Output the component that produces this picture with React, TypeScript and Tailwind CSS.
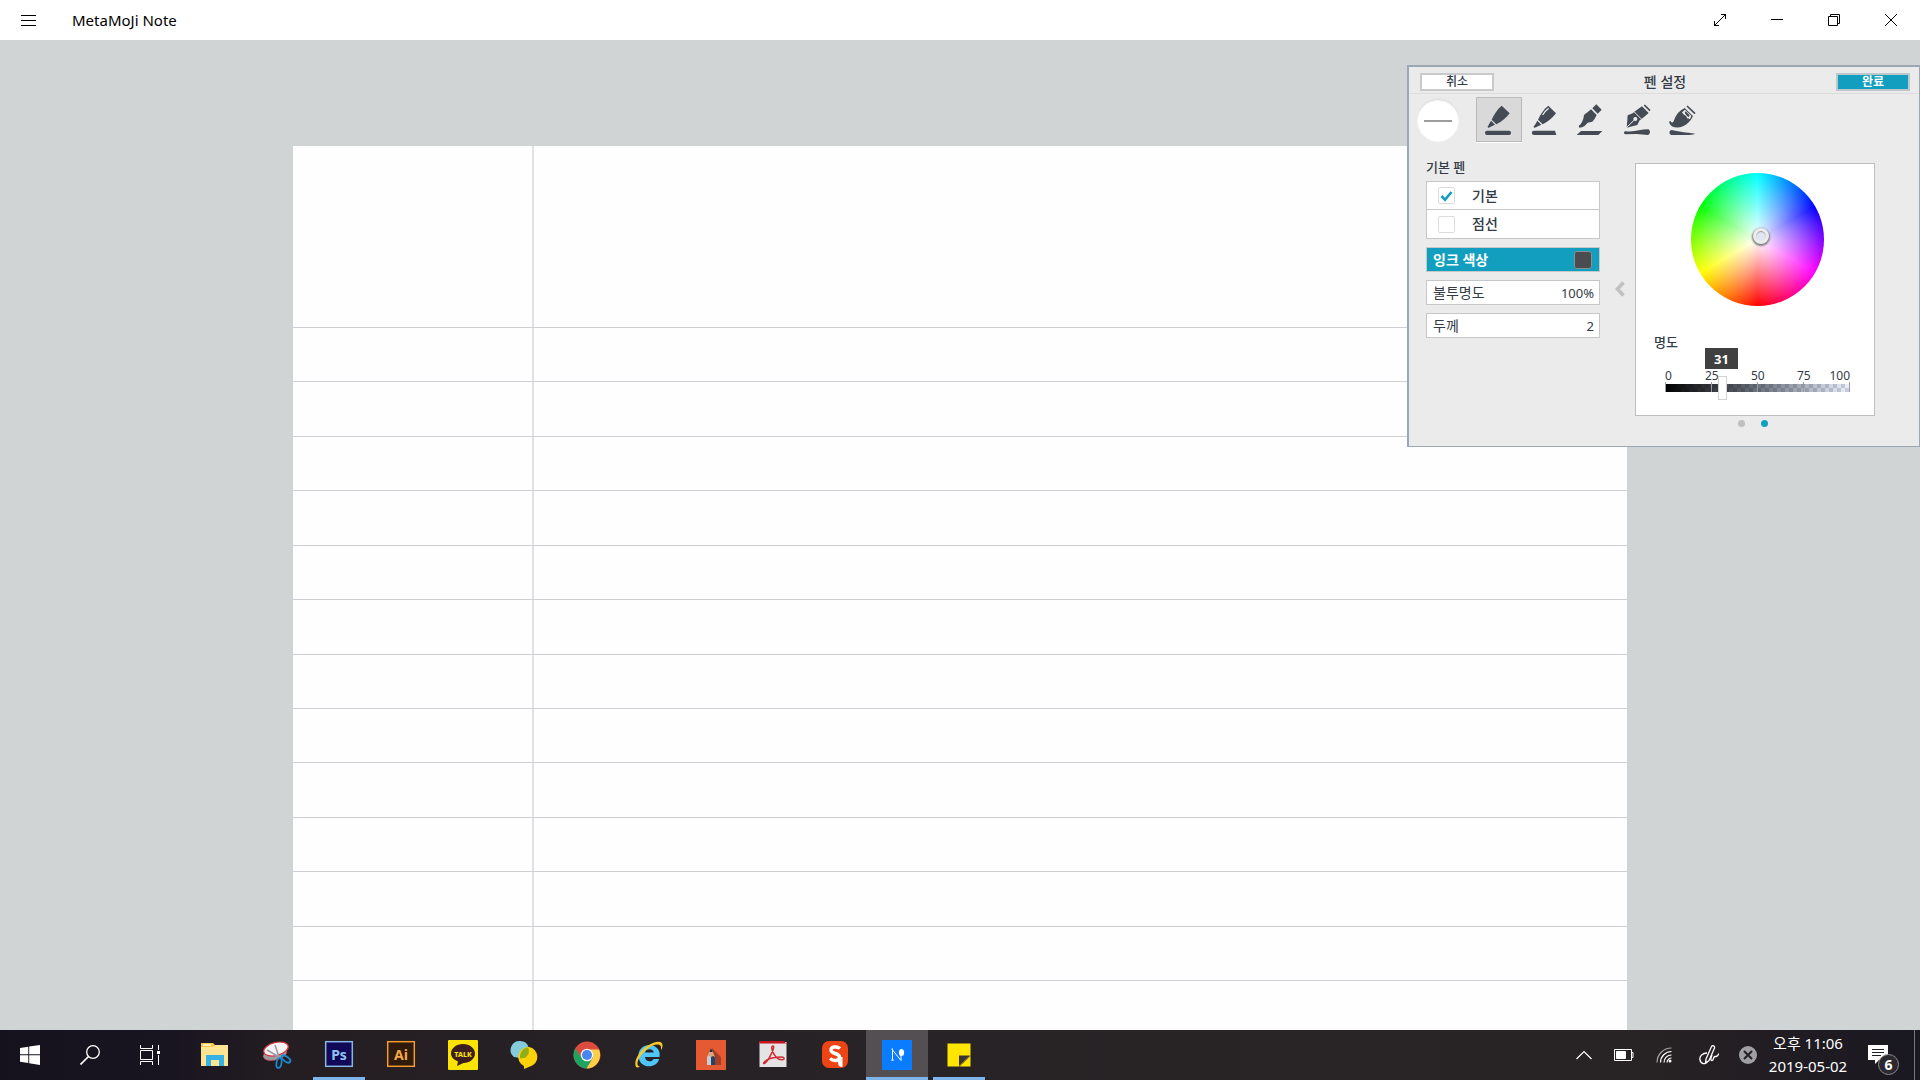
import { useState } from "react";
import type { ReactNode } from "react";

function TitleBar() {
  return (
    <header className="flex h-10 shrink-0 items-center justify-between bg-white text-black">
      <div className="flex items-center">
        <button aria-label="Menu" className="flex h-10 w-14 items-center justify-center pl-px">
          <svg className="h-[15px] w-[15px]" viewBox="0 0 15 15" stroke="currentColor" shapeRendering="crispEdges">
            <path d="M0 2.5h15M0 7.5h15M0 12.5h15" />
          </svg>
        </button>
        <h1 className="pl-4 text-[15px] leading-5">MetaMoJi Note</h1>
      </div>
      <div className="flex pr-px">
        <button aria-label="Full screen" className="flex h-10 w-[57px] items-center justify-center">
          <svg className="h-3 w-3" viewBox="0 0 12 12" fill="none" stroke="currentColor">
            <path d="M.5 11.500 11.500.5M7 .5h4.500V5M.5 7v4.500H5" />
          </svg>
        </button>
        <button aria-label="Minimize" className="flex h-10 w-[57px] items-center justify-center">
          <svg className="h-3 w-3" viewBox="0 0 12 12" stroke="currentColor">
            <path d="M0 5.500h12" />
          </svg>
        </button>
        <button aria-label="Restore" className="flex h-10 w-[57px] items-center justify-center">
          <svg className="h-3 w-3" viewBox="0 0 12 12" fill="none" stroke="currentColor">
            <path d="M.5 2.500h9v9h-9zM2.500 2.500v-2h9v9h-2" />
          </svg>
        </button>
        <button aria-label="Close" className="flex h-10 w-[57px] items-center justify-center">
          <svg className="h-3 w-3" viewBox="0 0 12 12" stroke="currentColor">
            <path d="m0 0 12 12M12 0 0 12" />
          </svg>
        </button>
      </div>
    </header>
  );
}

const ruledRows = Array.from({ length: 12 }, (_, i) => i);

function NotePage() {
  return (
    <div className="flex min-h-0 flex-1 bg-[#fefefe]">
      <div className="flex flex-1 flex-col bg-[linear-gradient(#e2e2e5,#e2e2e5)] bg-[length:2px_100%] bg-[position:239px_0] bg-no-repeat">
        <div className="h-[182px] shrink-0 border-b border-[#cfcfd5]" />
        {ruledRows.map((row) => (
          <div key={row} className="flex-1 border-b border-[#cfcfd5]" />
        ))}
        <div className="h-[49px] shrink-0" />
      </div>
    </div>
  );
}

const pens: { name: string; icon: ReactNode }[] = [
  {
    name: "기본 펜",
    icon: (
      <>
        <path d="M77 26 101 49C92 61 78 74 61 82L47 68C54 51 65 36 77 26Z" />
        <path d="M45 71 57 83 47 88C42 92 36 94 35 91 34 88 38 86 39 82Z" />
        <rect x="27" y="101" width="78" height="13" rx="6" />
      </>
    ),
  },
  {
    name: "만년필",
    icon: (
      <>
        <path d="M79 26 102 49C93 61 79 74 62 82L48 68C55 51 66 36 79 26Z" />
        <path d="M46 71 58 83 48 88C42 92 36 94 35 91 34 88 38 86 40 82Z" />
        <path d="M80 34C72 40 67 46 62 54" fill="none" stroke="#ebebeb" strokeWidth="4" />
        <path d="M36 101H99L103 114H36A6 6 0 0 1 36 101Z" />
      </>
    ),
  },
  {
    name: "형광펜",
    icon: (
      <>
        <path d="M85 22 101 38 89 50 73 34Z" />
        <path d="M69 37 86 54C82 61 80 68 73 74L59 77C53 85 46 91 34 92L32 87C38 82 42 77 46 65L48 54C55 48 62 44 69 37Z" />
        <path d="M39 102H103L91 114H26Z" />
      </>
    ),
  },
  {
    name: "캘리그라피 펜",
    icon: (
      <>
        <path d="M91 24 108 41" fill="none" stroke="currentColor" strokeWidth="5" />
        <path d="M84 28 104 48 83 66 77 70 70 84 38 92 41 55 56 49 63 43Z" />
        <path d="M36 93 62 68M60 44 83 67" fill="none" stroke="#ebebeb" strokeWidth="3" />
        <circle cx="64" cy="66" r="6" fill="#ebebeb" />
        <path d="M36 103C62 106 80 97 102 97 110 98 110 112 102 114L68 111 34 112C28 110 29 103 36 103Z" />
      </>
    ),
  },
  {
    name: "붓",
    icon: (
      <>
        <path d="M81 27 105 50" fill="none" stroke="currentColor" strokeWidth="5" />
        <path d="M74 33 99 57C93 70 83 82 69 88 53 95 33 93 28 78 27 73 30 70 32 73 34 79 40 78 42 70 47 53 58 41 74 33Z" />
        <path d="M75 38 94 56 90 67C86 63 82 67 80 60 78 54 72 57 66 46Z" fill="#ebebeb" />
        <path d="M77 43 89 55 86 60C81 57 77 52 74 47Z" />
        <path d="M35 99C52 103 80 107 106 110 98 113 90 114 78 114H34C26 112 27 100 35 99Z" />
      </>
    ),
  },
];

function PenPicker() {
  const [selected, setSelected] = useState(0);
  return (
    <div className="flex px-[9px] pt-[3px]">
      <div className="mt-1 mr-[18px] flex h-10 w-10 items-center justify-center rounded-full bg-white shadow-[0_0_0_1px_#f6f6f6,0_-2px_2px_#dadada]">
        <div className="h-[2px] w-7 bg-[#9c9c9c]" />
      </div>
      {pens.map((pen, i) => (
        <button
          key={pen.name}
          aria-label={pen.name}
          aria-pressed={i === selected}
          onClick={() => setSelected(i)}
          className={`h-[45px] w-[46px] ${
            i === selected ? "bg-[#d9d9d9] shadow-[inset_0_0_0_1px_#b9b9b9,0_1px_0_#fff]" : ""
          }`}
        >
          <svg className="h-[45px] w-[46px] text-[#454b54]" viewBox="0 0 138 135" fill="currentColor">
            {pen.icon}
          </svg>
        </button>
      ))}
    </div>
  );
}

function LineStyle({ label, defaultChecked }: { label: string; defaultChecked?: boolean }) {
  return (
    <label className="flex h-7 items-center pl-[11px] text-[14px] leading-5 font-medium">
      <span className="relative mr-[17px] h-[17px] w-[17px]">
        <input
          type="checkbox"
          defaultChecked={defaultChecked}
          className="peer block h-[17px] w-[17px] appearance-none rounded-[2px] border border-[#dcdcdc] bg-white"
        />
        <svg
          className="pointer-events-none absolute inset-0 hidden h-[17px] w-[17px] peer-checked:block"
          viewBox="0 0 17 17"
          fill="none"
          stroke="#129fbf"
          strokeWidth="2.6"
        >
          <path d="M3.500 9 7 12.800 13.500 5" />
        </svg>
      </span>
      {label}
    </label>
  );
}

function PenOptions() {
  return (
    <div className="w-[174px] pt-[15px]">
      <h3 className="text-[13px] leading-5 font-medium">기본 펜</h3>
      <div className="mt-1 mb-2 divide-y divide-[#c6c7c9] border border-[#c6c7c9] bg-white">
        <LineStyle label="기본" defaultChecked />
        <LineStyle label="점선" />
      </div>
      <div className="flex flex-col gap-2 text-[14px] leading-5">
        <button className="flex h-[25px] items-center justify-between border border-[#c6c7c9] bg-[#129fbf] pr-[7px] pl-[6px] font-bold text-white">
          잉크 색상
          <span className="h-[18px] w-[18px] rounded-[3px] border border-[#8a8f94] bg-[#4a4c50]" />
        </button>
        <button className="flex h-[25px] items-center justify-between border border-[#c6c7c9] bg-white pr-[5px] pl-[6px]">
          불투명도
          <span className="text-[13px]">100%</span>
        </button>
        <button className="flex h-[25px] items-center justify-between border border-[#c6c7c9] bg-white pr-[5px] pl-[6px]">
          두께
          <span className="text-[13px]">2</span>
        </button>
      </div>
    </div>
  );
}

function ColorWheel() {
  return (
    <div className="relative mx-auto mt-[9px] mr-[50px] h-[133px] w-[133px] rounded-full bg-[radial-gradient(closest-side,#fff,transparent),conic-gradient(#0ff,#00f_60deg,#f0f_120deg,#f00_180deg,#ff0_240deg,#0f0_300deg,#0ff)]">
      <span className="absolute top-[55px] left-[62px] h-4 w-4 rounded-full border-[3px] border-[#ececec] bg-[#e2e6f3] shadow-[0_1px_2px_1px_#777,inset_0_1px_1px_#999]" />
    </div>
  );
}

function Brightness() {
  const [value, setValue] = useState(31);
  return (
    <div className="mt-[26px] pl-[18px]">
      <label htmlFor="brightness" className="block text-[13px] leading-5 font-medium">
        명도
      </label>
      <div className="relative ml-[11px] w-[185px] pt-4">
        <div className="grid grid-cols-[40px_46px_46px_1fr_auto] text-[12px] leading-4">
          <span>0</span>
          <span>25</span>
          <span>50</span>
          <span>75</span>
          <span>100</span>
        </div>
        <div className="flex h-2 justify-between bg-[linear-gradient(90deg,#000,rgba(60,66,80,0.75)_50%,rgba(215,224,245,0.45)),repeating-conic-gradient(#fff_0_25%,#bcc2cf_0_50%)] bg-[length:100%_100%,8px_8px]">
          {[0, 25, 50, 75, 100].map((tick) => (
            <span key={tick} className="-mt-[2px] w-px bg-[#9a9ca0]" />
          ))}
        </div>
        <output
          htmlFor="brightness"
          className="absolute -top-1 left-10 flex h-[21px] w-[33px] items-center justify-center bg-[#404040] text-[13px] leading-5 font-bold text-white"
        >
          {value}
        </output>
        <input
          id="brightness"
          type="range"
          min={0}
          max={100}
          value={value}
          onChange={(e) => setValue(Number(e.target.value))}
          className="absolute -bottom-2 -left-1 h-6 w-48 appearance-none bg-transparent [&::-webkit-slider-thumb]:h-6 [&::-webkit-slider-thumb]:w-[9px] [&::-webkit-slider-thumb]:appearance-none [&::-webkit-slider-thumb]:border [&::-webkit-slider-thumb]:border-[#d0d0d0] [&::-webkit-slider-thumb]:bg-white"
        />
      </div>
    </div>
  );
}

function PenSettings() {
  return (
    <section
      aria-label="펜 설정"
      className="absolute top-[25px] right-0 w-[513px] border-2 border-r border-b border-[#9ba8b3] bg-[#ebebeb] text-[#333b47]"
    >
      <div className="flex h-[27px] items-center justify-between border-b border-[#dcdcdc] pt-1 pr-[9px] pl-[11px]">
        <button className="h-[18px] w-[74px] border-2 border-[#c8c9ca] bg-white text-[12px] leading-[14px] font-medium">
          취소
        </button>
        <h2 className="text-[14px] leading-5 font-medium">펜 설정</h2>
        <button className="h-[18px] w-[74px] border-2 border-[#bcc8cb] bg-[#129fbf] text-[12px] leading-[14px] font-bold text-white">
          완료
        </button>
      </div>
      <PenPicker />
      <div className="flex pl-[17px]">
        <PenOptions />
        <button aria-label="이전" className="flex w-[35px] justify-center self-stretch pt-[139px] pl-1">
          <svg className="h-4 w-[10px]" viewBox="0 0 10 16" fill="none" stroke="#c1c1c1" strokeWidth="3.6">
            <path d="M8.500 1.500 2.500 8l6 6.500" />
          </svg>
        </button>
        <div className="pt-[21px]">
          <div className="h-[253px] w-60 border border-[#bcbec0] bg-white">
            <ColorWheel />
            <Brightness />
          </div>
          <div className="mt-[4px] mb-[19px] flex justify-center gap-4 pr-1">
            <button aria-label="1" className="h-[7px] w-[7px] rounded-full bg-[#bfbfbf]" />
            <button aria-label="2" className="h-[7px] w-[7px] rounded-full bg-[#129fbf]" />
          </div>
        </div>
      </div>
    </section>
  );
}

// All taskbar app icons share a 30x30 box.
const apps: { name: string; state?: "running" | "active"; icon: ReactNode }[] = [
  {
    name: "File Explorer",
    icon: (
      <>
        <path d="M1 3h12l2 2h13v20H1z" fill="#f7c64a" />
        <path d="M1 7h12l2-2h13v21H1z" fill="#fde493" />
        <path d="M3 4h8v2H3z" fill="#fdf0c0" />
        <path d="M6 26V15h18v11h-5v-6h-8v6z" fill="#36b1e6" />
      </>
    ),
  },
  {
    name: "Snipping Tool",
    icon: (
      <>
        <ellipse cx="13" cy="14" rx="12" ry="6" transform="rotate(-14 13 14)" fill="#9b9b9f" stroke="#d6494f" strokeWidth=".6" />
        <ellipse cx="14" cy="9" rx="12.500" ry="6.500" transform="rotate(-14 14 9)" fill="#f5f3f6" stroke="#d5343d" strokeWidth="1.200" />
        <path d="M5 10l12 7M13 5l4 12" stroke="#9c9ca2" strokeWidth="1.600" />
        <ellipse cx="17" cy="23" rx="2.500" ry="5" transform="rotate(10 17 23)" fill="none" stroke="#1c87cf" strokeWidth="1.800" />
        <ellipse cx="24" cy="19" rx="5" ry="2.500" transform="rotate(35 24 19)" fill="none" stroke="#1c87cf" strokeWidth="1.800" />
      </>
    ),
  },
  {
    name: "Photoshop",
    state: "running",
    icon: (
      <>
        <rect x="1.700" y="1.700" width="26.600" height="24.600" fill="#100958" stroke="#86b5e6" strokeWidth="1.500" />
        <text x="15" y="19.500" textAnchor="middle" fontSize="14" fontWeight="700" fill="#90c0ee">
          Ps
        </text>
      </>
    ),
  },
  {
    name: "Illustrator",
    icon: (
      <>
        <rect x="1.700" y="1.700" width="26.600" height="24.600" fill="#301a0b" stroke="#f29a2c" strokeWidth="1.500" />
        <text x="15" y="19.500" textAnchor="middle" fontSize="14" fontWeight="700" fill="#f5a848">
          Ai
        </text>
      </>
    ),
  },
  {
    name: "KakaoTalk",
    icon: (
      <>
        <rect width="30" height="30" rx="1" fill="#fce300" />
        <path d="M15 4c6.600 0 12 4.200 12 9.500S21.600 23 15.500 23L9 26l1-4.500C6 20 3 17 3 13.500 3 8.200 8.400 4 15 4z" fill="#3b1e1e" />
        <text x="15" y="16.500" textAnchor="middle" fontSize="7" fontWeight="800" fill="#fce300">
          TALK
        </text>
      </>
    ),
  },
  {
    name: "Messenger",
    icon: (
      <>
        <path d="M10 1a9 9 0 0 1 5 16.500L10 18 4 17A9 9 0 0 1 10 1z" fill="#84cbdc" />
        <path d="M19 7a10 10 0 0 1 1 19.500L14 29v-3A10 10 0 0 1 19 7z" fill="#fdd108" />
        <path d="M18 7.200c2 4 .5 8.500-3 10.500l-5 .8C9.500 13 12.500 8 18 7.200z" fill="#8fae17" />
      </>
    ),
  },
  {
    name: "Chrome",
    icon: (
      <>
        <circle cx="15" cy="15" r="13.500" fill="#dd4b3e" />
        <path d="M3.300 8.300A13.500 13.500 0 0 0 14.500 28.500L20.500 18 9.500 18z" fill="#1da362" />
        <path d="M27 9.500A13.500 13.500 0 0 1 14.500 28.500L21 17.500 18 9.500z" fill="#fdce48" />
        <circle cx="15" cy="15" r="6.300" fill="#f5f5f5" />
        <circle cx="15" cy="15" r="5" fill="#4787ef" />
      </>
    ),
  },
  {
    name: "Internet Explorer",
    icon: (
      <>
        <path d="M25.500 17H11c.2 5 7 5.700 8.500 2h5.600C22.500 29.500 4.500 29 4.500 15.500 4.500 2.500 23 1.500 25.500 12.500c.3 1.300.2 3 0 4.500zM11 12.500h8.800c-.5-4.500-8-4.500-8.800 0z" fill="#4fc6f5" />
        <path d="M2 27C-1 21 6 10 14 5.500 21 1 29 0 28.500 6c0 1.500-.5 3-1.500 4.500.5-4-.5-6-3-6C18 4 8 12 4.500 19.500 2.800 23 3 26 6 26.500c-1.500 1-3.200 1.200-4 .5z" fill="#f8c928" />
      </>
    ),
  },
  {
    name: "Sketchbook",
    icon: (
      <>
        <path d="M0 0h30v30H0z" fill="#e65a33" />
        <path d="M16 8l9 9v8h-9z" fill="#a63e24" />
        <path d="M15 8l4 9v8h-8v-8z" fill="#d9a983" />
        <path d="M15 8l1.600 4h-3.200z" fill="#1e2b38" />
        <path d="M11 17l2-1 2 1v8h-4z" fill="#c9ccd0" />
        <path d="M15 17l2-1 2 1v8h-4z" fill="#26436a" />
      </>
    ),
  },
  {
    name: "Acrobat Reader",
    icon: (
      <>
        <path d="M1.500 2h27v25h-27z" fill="#e4e4e4" />
        <path d="M1.500 1h24l3 2.500h-27z" fill="#c5161d" />
        <path d="M15 6c-3 0 0 8 3.500 11.500S27 20 26 18s-13-.5-17 2-4 4-2.500 3.500C10 22 18 6 15 6z" fill="none" stroke="#d02c33" strokeWidth="1.500" />
      </>
    ),
  },
  {
    name: "S Note",
    icon: (
      <>
        <rect x="2" y="1" width="26" height="27" rx="7" fill="#ee4414" />
        <path d="M20 8.500c-3-2.500-9-2-9 1.500 0 4.500 9 2.500 8.500 7.500-.3 3.500-6 4-9.500 1" fill="none" stroke="#fff" strokeWidth="3.500" />
        <path d="M18 17h4.500v10c-3 0-4.500-1.500-4.500-4z" fill="#fff" />
      </>
    ),
  },
  {
    name: "MetaMoJi Note",
    state: "active",
    icon: (
      <>
        <path d="M0 0h30v30H0z" fill="#0a7cff" />
        <path d="M10.500 21V10L19 20.500V15" fill="none" stroke="#fff" strokeWidth="1" />
        <ellipse cx="19.500" cy="12.500" rx="2.600" ry="3.500" fill="#fff" />
        <path d="M9 9l2-1v3zM9.500 19h2v2h-2z" fill="#cfe4ff" />
      </>
    ),
  },
  {
    name: "Sticky Notes",
    state: "running",
    icon: (
      <>
        <path d="M3.500 3.500h23v12L15 26.500H3.500z" fill="#ffe600" />
        <path d="M15 15.500h11L15 26z" fill="#3a3335" />
        <path d="M26.500 16v10.500H15.500z" fill="#ffe600" />
      </>
    ),
  },
];

function Tray() {
  return (
    <div className="flex items-center text-white">
      <button aria-label="Show hidden icons" className="flex w-10 justify-center">
        <svg className="h-4 w-4" viewBox="0 0 16 16" fill="none" stroke="currentColor" strokeWidth="1.200">
          <path d="M.5 12 8 4.500 15.500 12" />
        </svg>
      </button>
      <button aria-label="Battery" className="flex w-10 justify-center">
        <svg className="h-3 w-5" viewBox="0 0 20 12" fill="none" stroke="currentColor">
          <path d="M.5.5h17v11H.5zM17.500 3.500h1.500v5h-1.500" />
          <path d="M2.500 2.500h9v7h-9z" fill="currentColor" />
        </svg>
      </button>
      <button aria-label="Wi-Fi" className="flex w-10 justify-center">
        <svg className="h-4 w-4" viewBox="0 0 16 16" fill="none" stroke="currentColor" strokeWidth="1.200">
          <path d="M1 15.500A14.500 14.500 0 0 1 15.500 1" opacity=".6" />
          <path d="M4.500 15.500a11 11 0 0 1 11-11M8 15.500A7.500 7.500 0 0 1 15.500 8M11 15.500a4.500 4.500 0 0 1 4.500-4.500" />
          <circle cx="14" cy="14" r="1.500" fill="currentColor" stroke="none" />
        </svg>
      </button>
      <button aria-label="Windows Ink" className="flex w-[46px] justify-center pl-1">
        <svg className="h-5 w-5" viewBox="0 0 20 20" fill="none" stroke="currentColor" strokeWidth="1.300">
          <path d="M7 14 12.500 1.500c1-1.500 3.500-.5 3 1.500L10 15.500 6.500 18z" />
          <path d="M8 8C4 8 0 11 1 15c1 4.500 6 4.500 7.500 1.500M13 10c-1 3-2 5.500 0 5.500s1-4 3-4 2 0 4-3" />
        </svg>
      </button>
      <button aria-label="Status" className="flex w-9 justify-center">
        <svg className="h-[18px] w-[18px]" viewBox="0 0 18 18">
          <circle cx="9" cy="9" r="9" fill="#a09fa1" />
          <path d="m5 5 8 8M13 5l-8 8" stroke="#242024" strokeWidth="2" />
        </svg>
      </button>
      <button className="w-[84px] text-center text-[15px] leading-[23px] whitespace-nowrap">
        <time className="block">오후 11:06</time>
        <time className="block">2019-05-02</time>
      </button>
      <button aria-label="Notifications" className="relative flex w-[64px] justify-center pr-2">
        <svg className="h-5 w-5" viewBox="0 0 20 20">
          <path d="M0 0h20v15h-9l-4 4v-4H0z" fill="#fff" />
          <path d="M4 4.500h12M4 7.500h12M4 10.500h9" stroke="#201d24" />
        </svg>
        <span className="absolute top-[9px] left-7 flex h-[21px] w-[21px] items-center justify-center rounded-full border border-[#8c8a8f] bg-[#2b282e] text-[14px] leading-5 font-bold">
          6
        </span>
      </button>
      <div className="h-[50px] w-[6px] border-l border-[#77757a]" />
    </div>
  );
}

function Taskbar() {
  return (
    <nav
      aria-label="Taskbar"
      className="flex h-[50px] shrink-0 justify-between bg-[linear-gradient(90deg,#15121e,#191520_9%,#241e22_15%,#272225_35%,#292426_70%,#282324_85%,#1d1a22_96%,#19171f)] text-white"
    >
      <div className="flex">
        <button aria-label="Start" className="flex w-[60px] items-center justify-center">
          <svg className="h-5 w-5" viewBox="0 0 20 20" fill="currentColor">
            <path d="M0 3 8.300 1.700v7.600H0zM9.200 1.500 20 0v9.300H9.200zM0 10.200h8.300v7.700L0 16.800zM9.200 10.200H20V20L9.200 18.200z" />
          </svg>
        </button>
        <button aria-label="Search" className="flex w-[60px] items-center justify-center">
          <svg className="h-5 w-5" viewBox="0 0 20 20" fill="none" stroke="currentColor" strokeWidth="1.300">
            <circle cx="13" cy="7" r="6.300" />
            <path d="M8.500 11.500.5 19.500" strokeWidth="1.700" />
          </svg>
        </button>
        <button aria-label="Task view" className="mr-1 flex w-[60px] items-center justify-center">
          <svg className="h-5 w-5" viewBox="0 0 20 20" fill="none" stroke="currentColor">
            <path d="M.5 5.500h12v9H.5zM.5 0v3.500h12V0M.5 20v-3.500h12V20M18.500 0v5M18.500 10v10" />
            <path d="M17 6h3v3h-3z" fill="currentColor" stroke="none" />
          </svg>
        </button>
        {apps.map((app) => (
          <button
            key={app.name}
            aria-label={app.name}
            className={`relative flex w-[62px] items-center justify-center ${
              app.state === "active" ? "bg-[#544f52]" : ""
            }`}
          >
            <svg className="h-[30px] w-[30px]" viewBox="0 0 30 30">
              {app.icon}
            </svg>
            {app.state && (
              <span
                className={`absolute bottom-0 h-[3px] bg-[#7db4ea] ${
                  app.state === "active" ? "inset-x-0" : "inset-x-[5px]"
                }`}
              />
            )}
          </button>
        ))}
      </div>
      <Tray />
    </nav>
  );
}

export default function App() {
  return (
    <div className="flex h-screen min-h-[640px] flex-col overflow-hidden font-['Noto_Sans','Noto_Sans_CJK_KR',sans-serif]">
      <TitleBar />
      <main className="relative flex min-h-0 flex-1 flex-col bg-[#d0d4d4] px-[293px] pt-[106px]">
        <NotePage />
        <PenSettings />
      </main>
      <Taskbar />
    </div>
  );
}
